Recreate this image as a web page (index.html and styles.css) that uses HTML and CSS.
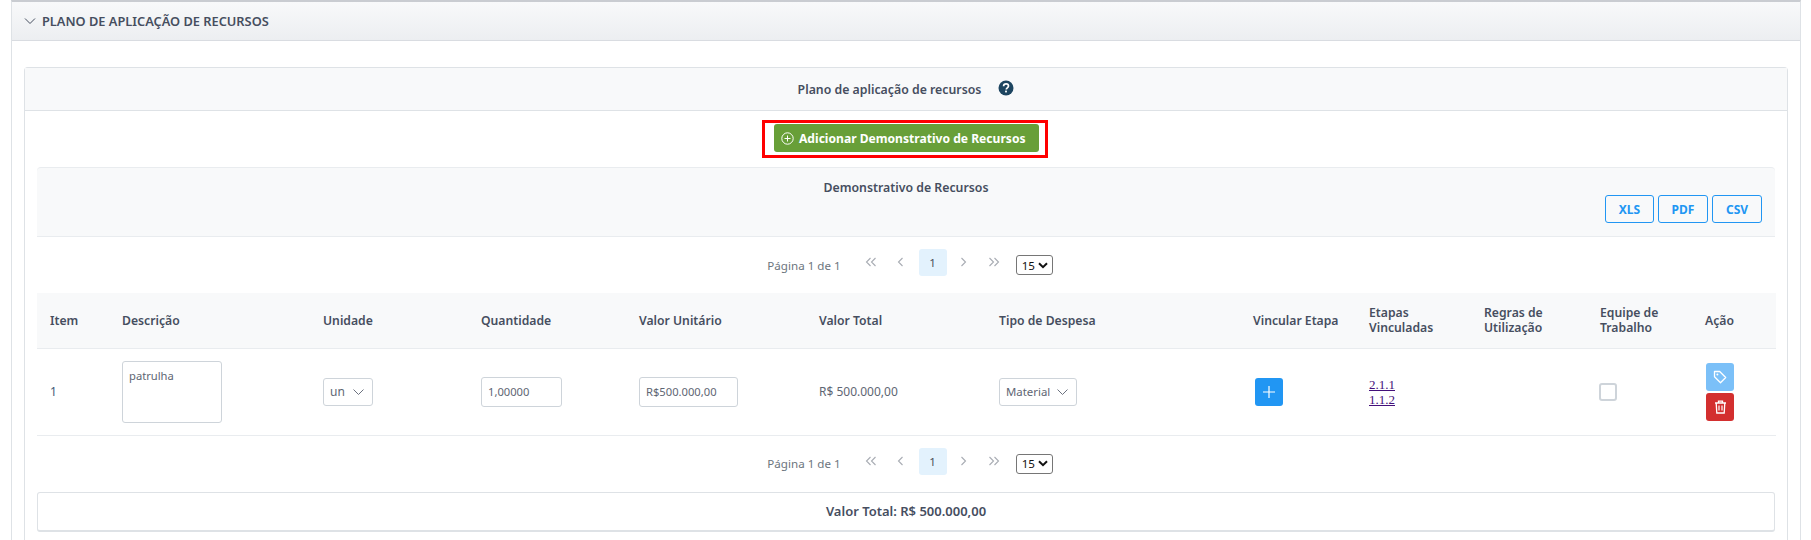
FILE: index.html
```html
<!DOCTYPE html>
<html lang="en">
<head>
    <meta charset="UTF-8">
    <meta name="viewport" content="width=device-width, initial-scale=1.0">
    <title>Plano de aplicação de recursos</title>
    <link rel="stylesheet" href="styles.css">
</head>
<body>
    <div class="panel">
        <div class="panel-header">
            <svg class="toggle-icon" width="12" height="12" viewBox="0 0 12 12"><path d="M1 3.5l5 5 5-5" fill="none" stroke="#464e5f" stroke-width="1"/></svg>
            <span>PLANO DE APLICAÇÃO DE RECURSOS</span>
        </div>

        <div class="panel-body">
            <div class="card">
                <div class="card-header">
                    <span>Plano de aplicação de recursos</span>
                    <svg class="help-icon" width="16" height="16" viewBox="0 0 16 16">
                        <circle cx="8" cy="8" r="7.5" fill="#1d4560"/>
                        <path d="M5.6 6.2c0-1.5 1.1-2.3 2.5-2.3s2.4.8 2.4 2.1c0 1.9-2.2 1.8-2.2 3.4" fill="none" stroke="#fff" stroke-width="1.7"/>
                        <rect x="7.1" y="10.6" width="1.8" height="1.8" fill="#fff"/>
                    </svg>
                </div>

                <div class="add-row">
                    <div class="highlight">
                        <button class="btn-add">
                            <svg width="13" height="13" viewBox="0 0 13 13"><circle cx="6.5" cy="6.5" r="5.7" fill="none" stroke="#fff" stroke-width="1"/><path d="M6.5 3.5v6M3.5 6.5h6" stroke="#fff" stroke-width="1"/></svg>
                            Adicionar Demonstrativo de Recursos
                        </button>
                    </div>
                </div>

                <div class="table-wrap">
                    <div class="table-caption">
                        <div class="caption-title">Demonstrativo de Recursos</div>
                        <div class="export-buttons">
                            <button class="btn-export btn-xls">XLS</button>
                            <button class="btn-export btn-pdf">PDF</button>
                            <button class="btn-export btn-csv">CSV</button>
                        </div>
                    </div>

                    <!-- Top pager -->
                    <div class="pager">
                        <span class="pager-text">Página 1 de 1</span>
                        <span class="pager-link"><svg width="12" height="10" viewBox="0 0 12 10"><path d="M5.5 1L1.5 5l4 4M10.5 1l-4 4 4 4" fill="none" stroke="#a8acb3" stroke-width="1.1"/></svg></span>
                        <span class="pager-link"><svg width="7" height="10" viewBox="0 0 7 10"><path d="M5.5 1L1.5 5l4 4" fill="none" stroke="#a8acb3" stroke-width="1.1"/></svg></span>
                        <span class="pager-current">1</span>
                        <span class="pager-link"><svg width="7" height="10" viewBox="0 0 7 10"><path d="M1.5 1l4 4-4 4" fill="none" stroke="#a8acb3" stroke-width="1.1"/></svg></span>
                        <span class="pager-link"><svg width="12" height="10" viewBox="0 0 12 10"><path d="M1.5 1l4 4-4 4M6.5 1l4 4-4 4" fill="none" stroke="#a8acb3" stroke-width="1.1"/></svg></span>
                        <span class="page-size">15<svg width="10" height="7" viewBox="0 0 10 7"><path d="M1 1.2l4 4 4-4" fill="none" stroke="#111" stroke-width="2"/></svg></span>
                    </div>

                    <table class="data-table">
                        <colgroup>
                            <col class="c-item"><col class="c-desc"><col class="c-unit"><col class="c-qty">
                            <col class="c-price"><col class="c-total"><col class="c-type"><col class="c-link">
                            <col class="c-steps"><col class="c-rules"><col class="c-team"><col class="c-action">
                        </colgroup>
                        <thead>
                            <tr>
                                <th>Item</th>
                                <th>Descrição</th>
                                <th>Unidade</th>
                                <th>Quantidade</th>
                                <th>Valor Unitário</th>
                                <th>Valor Total</th>
                                <th>Tipo de Despesa</th>
                                <th>Vincular Etapa</th>
                                <th>Etapas Vinculadas</th>
                                <th>Regras de Utilização</th>
                                <th>Equipe de Trabalho</th>
                                <th>Ação</th>
                            </tr>
                        </thead>
                        <tbody>
                            <tr>
                                <td class="item-no">1</td>
                                <td><textarea class="field field-desc">patrulha</textarea></td>
                                <td>
                                    <div class="dropdown dropdown-unit">un<svg width="13" height="8" viewBox="0 0 13 8"><path d="M1.5 1.5l5 5 5-5" fill="none" stroke="#6c7280" stroke-width="1"/></svg></div>
                                </td>
                                <td><input class="field field-qty" value="1,00000"></td>
                                <td><input class="field field-price" value="R$500.000,00"></td>
                                <td>R$ 500.000,00</td>
                                <td>
                                    <div class="dropdown dropdown-type">Material<svg width="13" height="8" viewBox="0 0 13 8"><path d="M1.5 1.5l5 5 5-5" fill="none" stroke="#6c7280" stroke-width="1"/></svg></div>
                                </td>
                                <td>
                                    <button class="btn-icon btn-blue"><svg width="14" height="14" viewBox="0 0 14 14"><path d="M7 1v12M1 7h12" stroke="#fff" stroke-width="1.2"/></svg></button>
                                </td>
                                <td class="step-links"><a href="#">2.1.1</a><br><a href="#">1.1.2</a></td>
                                <td></td>
                                <td><input type="checkbox" class="check"></td>
                                <td>
                                    <div class="action-stack">
                                        <button class="btn-icon btn-tag"><svg width="14" height="14" viewBox="0 0 14 14"><path d="M1.5 1.5h5.2l6 6-5.2 5.2-6-6z" fill="none" stroke="#fff" stroke-width="1.3" stroke-linejoin="round"/><circle cx="4.4" cy="4.4" r="1" fill="#fff"/></svg></button>
                                        <button class="btn-icon btn-trash"><svg width="13" height="14" viewBox="0 0 13 14"><path d="M1 3h11M4.5 3V1.2h4V3M2.2 3l.6 10h7.4l.6-10" fill="none" stroke="#fff" stroke-width="1.3"/><path d="M5 5.5v5M8 5.5v5" stroke="#fff" stroke-width="1.2"/></svg></button>
                                    </div>
                                </td>
                            </tr>
                        </tbody>
                    </table>

                    <!-- Bottom pager -->
                    <div class="pager">
                        <span class="pager-text">Página 1 de 1</span>
                        <span class="pager-link"><svg width="12" height="10" viewBox="0 0 12 10"><path d="M5.5 1L1.5 5l4 4M10.5 1l-4 4 4 4" fill="none" stroke="#a8acb3" stroke-width="1.1"/></svg></span>
                        <span class="pager-link"><svg width="7" height="10" viewBox="0 0 7 10"><path d="M5.5 1L1.5 5l4 4" fill="none" stroke="#a8acb3" stroke-width="1.1"/></svg></span>
                        <span class="pager-current">1</span>
                        <span class="pager-link"><svg width="7" height="10" viewBox="0 0 7 10"><path d="M1.5 1l4 4-4 4" fill="none" stroke="#a8acb3" stroke-width="1.1"/></svg></span>
                        <span class="pager-link"><svg width="12" height="10" viewBox="0 0 12 10"><path d="M1.5 1l4 4-4 4M6.5 1l4 4-4 4" fill="none" stroke="#a8acb3" stroke-width="1.1"/></svg></span>
                        <span class="page-size">15<svg width="10" height="7" viewBox="0 0 10 7"><path d="M1 1.2l4 4 4-4" fill="none" stroke="#111" stroke-width="2"/></svg></span>
                    </div>

                    <div class="grand-total">Valor Total: R$ 500.000,00</div>
                </div>
            </div>
        </div>
    </div>
</body>
</html>
```

FILE: styles.css
```css
/* Main styling */
html, body {
    height: 540px;
    overflow: hidden;
}

body {
    margin: 0;
    padding: 0 10px 0 11px;
    font-family: "Noto Sans", sans-serif;
    font-size: 12px;
    color: #5e6673;
    background-color: #ffffff;
}

.panel {
    border-left: 1px solid #dee2e6;
    border-right: 1px solid #dee2e6;
    border-top: 2px solid #c9ccd1;
}

.panel-header {
    display: flex;
    align-items: center;
    gap: 6px;
    height: 38px;
    padding-left: 12px;
    border-bottom: 1px solid #d9dce1;
    background: linear-gradient(#f8f9fa, #eceef1);
    font-size: 12.8px;
    font-weight: 600;
    color: #464e5f;
}

.panel-body {
    padding: 26px 12px 0;
}

.card {
    border: 1px solid #dee2e6;
    border-bottom: none;
    border-radius: 4px 4px 0 0;
    padding-bottom: 12px;
}

.card-header {
    display: flex;
    justify-content: center;
    align-items: center;
    gap: 17px;
    height: 42px;
    border-bottom: 1px solid #dee2e6;
    background-color: #f8f9fa;
    font-size: 12.3px;
    font-weight: 600;
    color: #464e5f;
}

.help-icon {
    margin-bottom: 3px;
}

.add-row {
    display: flex;
    justify-content: center;
    padding: 9px 2px 9px 0;
}

.highlight {
    border: 3px solid #ff0000;
    padding: 1px 6px 3px 9px;
}

.btn-add {
    display: flex;
    align-items: center;
    gap: 5px;
    height: 28px;
    width: 265px;
    padding: 0 0 0 7px;
    border: none;
    border-radius: 3px;
    background-color: #689f38;
    color: #ffffff;
    font-family: inherit;
    font-size: 12.1px;
    font-weight: 700;
}

.table-wrap {
    margin: 0 12px;
}

.table-caption {
    height: 68px;
    border-top: 1px solid #e9ecef;
    border-bottom: 1px solid #e9ecef;
    border-radius: 4px 4px 0 0;
    background-color: #f8f9fa;
    position: relative;
    text-align: center;
    font-size: 12.3px;
    font-weight: 600;
    color: #464e5f;
}

.caption-title {
    padding-top: 11px;
}

.export-buttons {
    position: absolute;
    top: 27px;
    right: 13px;
    display: flex;
    gap: 4px;
}

.btn-export {
    height: 28px;
    padding: 0;
    border: 1px solid #2196f3;
    border-radius: 3px;
    background-color: transparent;
    color: #2196f3;
    font-family: inherit;
    font-size: 12px;
    font-weight: 700;
}

.btn-xls { width: 49px; }
.btn-pdf { width: 50px; }
.btn-csv { width: 50px; }

.pager {
    display: flex;
    justify-content: center;
    align-items: center;
    height: 56px;
    padding-left: 8px;
    font-size: 11.6px;
    color: #6c757d;
}

.pager-text {
    margin-right: 15px;
}

.pager-link {
    display: flex;
    justify-content: center;
    width: 30px;
    margin-bottom: 6px;
}

.pager-current {
    display: flex;
    justify-content: center;
    align-items: center;
    width: 28px;
    height: 27px;
    margin: 0 2px 5px 3px;
    border-radius: 3px;
    background-color: #e3f2fd;
    color: #495057;
}

.page-size {
    display: flex;
    align-items: center;
    justify-content: space-between;
    width: 37px;
    height: 20px;
    box-sizing: border-box;
    margin-left: 7px;
    padding: 0 4px 0 5px;
    border: 1px solid #767676;
    border-radius: 3px;
    color: #111111;
}

.data-table {
    width: 1739px;
    table-layout: fixed;
    border-collapse: collapse;
}

.c-item { width: 72px; }
.c-desc { width: 201px; }
.c-unit { width: 158px; }
.c-qty { width: 158px; }
.c-price { width: 180px; }
.c-total { width: 180px; }
.c-type { width: 254px; }
.c-link { width: 116px; }
.c-steps { width: 115px; }
.c-rules { width: 116px; }
.c-team { width: 105px; }
.c-action { width: 84px; }

.data-table th {
    height: 55px;
    padding: 0 13px;
    box-sizing: border-box;
    border-bottom: 1px solid #e9ecef;
    background-color: #f8f9fa;
    text-align: left;
    font-size: 12.2px;
    font-weight: 600;
    line-height: 15px;
    color: #464e5f;
}

.data-table td {
    height: 87px;
    padding: 0 13px;
    box-sizing: border-box;
    border-bottom: 1px solid #e9ecef;
    vertical-align: middle;
}

.item-no {
    color: #3f5a78;
}

.field {
    display: block;
    box-sizing: border-box;
    padding: 0 6px;
    border: 1px solid #ced4da;
    border-radius: 3px;
    background-color: #ffffff;
    font-family: inherit;
    font-size: 11.2px;
    color: #5e6673;
}

.field-desc {
    width: 100px;
    height: 62px;
    padding-top: 6px;
    resize: none;
}

.field-qty {
    width: 81px;
    height: 30px;
}

.field-price {
    width: 99px;
    height: 30px;
}

.dropdown {
    display: flex;
    align-items: center;
    justify-content: space-between;
    box-sizing: border-box;
    height: 28px;
    padding: 0 7px 0 6px;
    border: 1px solid #ced4da;
    border-radius: 3px;
}

.dropdown-unit { width: 50px; }
.dropdown-type { width: 78px; font-size: 11.4px; }

.btn-icon {
    display: flex;
    justify-content: center;
    align-items: center;
    width: 28px;
    height: 28px;
    padding: 0;
    border: none;
    border-radius: 3px;
}

.btn-blue { background-color: #2196f3; margin-left: 2px; }
.btn-tag { background-color: #7bc0f8; }
.btn-trash { background-color: #d32f2f; }

.action-stack {
    display: flex;
    flex-direction: column;
    gap: 2px;
    margin-left: 1px;
}

.step-links {
    font-family: "Liberation Serif", serif;
    font-size: 13px;
    line-height: 15px;
}

.step-links a {
    color: #44107a;
}

.check {
    display: block;
    appearance: none;
    width: 18px;
    height: 18px;
    margin: 0 0 0 -1px;
    border: 2px solid #ced4da;
    border-radius: 3px;
    background-color: #ffffff;
}

.grand-total {
    display: flex;
    justify-content: center;
    align-items: center;
    height: 40px;
    box-sizing: border-box;
    border: 1px solid #dee2e6;
    border-bottom-width: 2px;
    border-radius: 3px;
    font-size: 13px;
    font-weight: 600;
    color: #464e5f;
}
```
